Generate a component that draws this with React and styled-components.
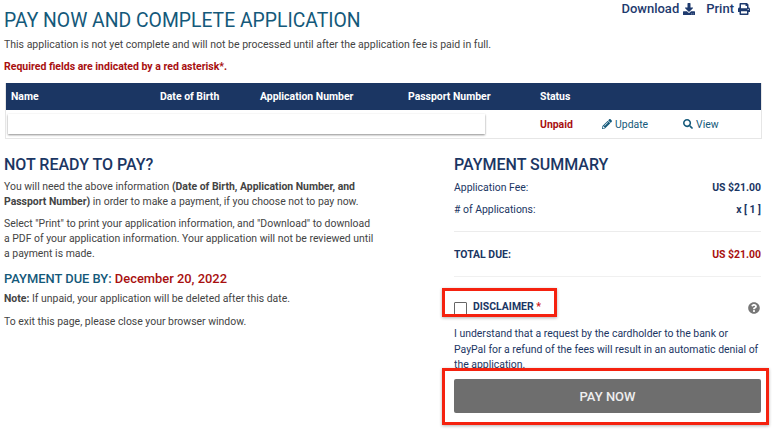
import React from "react"
import styled, { createGlobalStyle } from "styled-components"
import { FaDownload, FaPrint, FaPencilAlt, FaSearch, FaQuestionCircle } from "react-icons/fa"

const Global = createGlobalStyle`
	html, body {
		margin: 0;
		background: #fff;
	}
	body {
		font-family: Roboto, "Liberation Sans", sans-serif;
		font-size: 10.45px;
		color: #444;
		overflow: hidden;
	}
`

const Page = styled.div`
	width: 776px;
	height: 435px;
	padding: 0 15px 0 4px;
	box-sizing: border-box;
	overflow: hidden;
`

const Top = styled.div`
	display: flex;
	justify-content: space-between;
	align-items: flex-start;
	height: 38px;
`

const Title = styled.h1`
	margin: 9px 0 0;
	font-size: 19.35px;
	line-height: 24px;
	font-weight: 400;
	color: #14597a;
`

const Actions = styled.div`
	display: flex;
	gap: 11px;
	margin: 0 11px 0 0;
	padding-top: 1px;
`

const Action = styled.a`
	display: flex;
	align-items: center;
	gap: 4px;
	font-size: 13px;
	font-weight: 500;
	line-height: 15px;
	color: #1e3a6e;
	svg {
		width: 12px;
		height: 12px;
	}
`

const Intro = styled.p`
	margin: 0;
	line-height: 14px;
	font-size: 10.5px;
	color: ${p => (p.$required ? "#a80f0f" : "#444")};
	font-weight: ${p => (p.$required ? 700 : 400)};
	margin-bottom: 8px;
`

const Table = styled.div`
	margin: 9px 0 0 1px;
	width: 757px;
	height: 56px;
	box-sizing: border-box;
	border: 1px solid #e6e6e6;
	border-top: 0;
`

const Row = styled.div`
	display: grid;
	grid-template-columns: 149px 100px 148px 132px 62px 81px 1fr;
	align-items: center;
	height: ${p => (p.$head ? "27px" : "28px")};
	padding-left: 5px;
	background: ${p => (p.$head ? "#1b3663" : "#fff")};
	color: #fff;
	font-weight: 700;
`

const Blank = styled.div`
	grid-column: 1 / span 4;
	margin-left: -3px;
	width: 477px;
	height: 20px;
	background: #fff;
	box-shadow: 0 1px 2px rgba(0, 0, 0, 0.45);
`

const Status = styled.div`
	color: #a80f0f;
	font-weight: 700;
	white-space: nowrap;
`

const RowLink = styled.a`
	display: flex;
	align-items: center;
	gap: 3px;
	color: #14597a;
	font-weight: 400;
	white-space: nowrap;
	svg {
		flex: none;
		width: 10px;
		height: 10px;
	}
`

const Columns = styled.div`
	display: grid;
	grid-template-columns: 450px 307px;
	margin-top: 16px;
`

const Left = styled.div``

const Heading = styled.h2`
	margin: 0 0 6px;
	font-size: 16px;
	line-height: 19px;
	font-weight: 500;
	color: #1b3663;
`

const Para = styled.p`
	margin: 0 0 8px;
	line-height: 14.7px;
	width: 373px;
	b {
		font-weight: 700;
	}
`

const Due = styled.h3`
	margin: 0 0 4.5px;
	font-size: 12.9px;
	line-height: 18px;
	font-weight: 500;
	color: #14597a;
	span {
		color: #a80f0f;
	}
`

const Right = styled.div`
	color: #1b3663;
`

const Summary = styled.div`
	display: flex;
	justify-content: space-between;
	line-height: 15px;
	margin-bottom: 7px;
	b {
		font-weight: 700;
	}
`

const Total = styled.div`
	display: flex;
	justify-content: space-between;
	align-items: center;
	height: 44px;
	margin-top: 14px;
	border-top: 1px solid #ececec;
	border-bottom: 1px solid #f0f0f0;
	font-weight: 700;
	span:last-child {
		color: #a80f0f;
	}
`

const DisclaimerRow = styled.div`
	display: flex;
	align-items: flex-start;
	justify-content: space-between;
	margin-top: 22px;
	height: 27px;
`

const DisclaimerLabel = styled.label`
	position: relative;
	display: flex;
	align-items: center;
	gap: 6px;
	font-weight: 700;
	i {
		font-style: normal;
		color: #d01616;
	}
`

const DisclaimerText = styled.span`
	margin-top: -2px;
`

const Check = styled.span`
	display: block;
	width: 11px;
	height: 11px;
	border: 1px solid #666;
	border-radius: 1px;
	margin-top: 3px;
`

const Help = styled(FaQuestionCircle)`
	width: 12px;
	height: 12px;
	color: #777;
	margin: 3px 1px 0 0;
`

const Notice = styled.p`
	margin: 0;
	line-height: 15.5px;
	height: 46px;
	overflow: hidden;
`

const PayWrap = styled.div`
	position: relative;
	margin-top: 7px;
`

const PayButton = styled.button`
	display: block;
	width: 100%;
	height: 34px;
	border: 0;
	border-radius: 2px;
	background: #6e6e6e;
	color: #eee;
	font: 500 13px Roboto, sans-serif;
`

// red marks drawn over the screenshot
const Mark = styled.div`
	position: absolute;
	top: ${p => p.$top}px;
	left: ${p => p.$left}px;
	width: ${p => p.$w}px;
	height: ${p => p.$h}px;
	box-sizing: border-box;
	border: 3px solid #f5220f;
	box-shadow: 0 1px 3px rgba(0, 0, 0, 0.3);
	pointer-events: none;
`

export default function App() {
	return (
		<>
			<Global />
			<Page>
				<Top>
					<Title>PAY NOW AND COMPLETE APPLICATION</Title>
					<Actions>
						<Action>Download <FaDownload /></Action>
						<Action>Print <FaPrint /></Action>
					</Actions>
				</Top>
				<Intro>This application is not yet complete and will not be processed until after the application fee is paid in full.</Intro>
				<Intro $required>Required fields are indicated by a red asterisk*.</Intro>
				<Table>
					<Row $head>
						<div>Name</div>
						<div>Date of Birth</div>
						<div>Application Number</div>
						<div>Passport Number</div>
						<div>Status</div>
					</Row>
					<Row>
						<Blank />
						<Status>Unpaid</Status>
						<RowLink><FaPencilAlt /> Update</RowLink>
						<RowLink><FaSearch /> View</RowLink>
					</Row>
				</Table>
				<Columns>
					<Left>
						<Heading>NOT READY TO PAY?</Heading>
						<Para>You will need the above information <b>(Date of Birth, Application Number, and Passport Number)</b> in order to make a payment, if you choose not to pay now.</Para>
						<Para>Select "Print" to print your application information, and "Download" to download a PDF of your application information. Your application will not be reviewed until a payment is made.</Para>
						<Due>PAYMENT DUE BY: <span>December 20, 2022</span></Due>
						<Para><b>Note:</b> If unpaid, your application will be deleted after this date.</Para>
						<Para>To exit this page, please close your browser window.</Para>
					</Left>
					<Right>
						<Heading>PAYMENT SUMMARY</Heading>
						<Summary><span>Application Fee:</span><b>US $21.00</b></Summary>
						<Summary><span># of Applications:</span><b>x [ 1 ]</b></Summary>
						<Total><span>TOTAL DUE:</span><span>US $21.00</span></Total>
						<DisclaimerRow>
							<DisclaimerLabel>
								<Check />
								<DisclaimerText>DISCLAIMER <i>*</i></DisclaimerText>
								<Mark $top={-11} $left={-12} $w={115} $h={29} />
							</DisclaimerLabel>
							<Help />
						</DisclaimerRow>
						<Notice>I understand that a request by the cardholder to the bank or PayPal for a refund of the fees will result in an automatic denial of the application.</Notice>
						<PayWrap>
							<Mark $top={-11} $left={-12} $w={327} $h={57} />
							<PayButton>PAY NOW</PayButton>
						</PayWrap>
					</Right>
				</Columns>
			</Page>
		</>
	)
}
